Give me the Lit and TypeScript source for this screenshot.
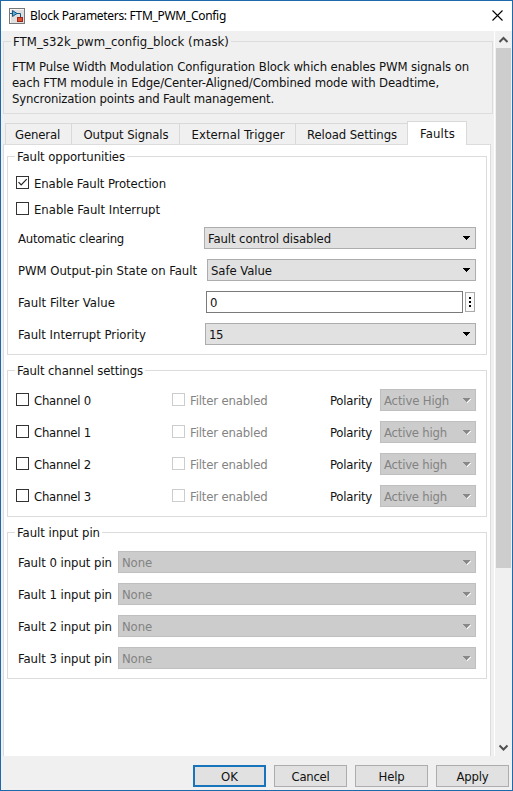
import { LitElement, html, css, svg } from "lit";
import { customElement, property } from "lit/decorators.js";
import { classMap } from "lit/directives/class-map.js";

/** A single line of text, tracked so that it takes up the given width. */
@customElement("fit-text")
class FitText extends LitElement {
  @property() text = "";
  @property({ type: Number }) w = 0;
  static styles = css`
    :host { display: block; height: var(--line, 16px); white-space: pre; flex: none; }
    span { display: inline-block; line-height: var(--lead, 18px); vertical-align: top; }
  `;
  updated() {
    const el = this.renderRoot.querySelector("span") as HTMLElement;
    el.style.letterSpacing = "0px";
    const natural = el.getBoundingClientRect().width;
    el.style.letterSpacing = (this.w - natural) / this.text.length + "px";
  }
  render() { return html`<span>${this.text}</span>`; }
}

@customElement("check-box")
class CheckBox extends LitElement {
  @property() label = "";
  @property({ type: Number }) w = 0;
  @property({ type: Boolean }) checked = false;
  @property({ type: Boolean }) disabled = false;
  static styles = css`
    :host { display: flex; align-items: center; height: 16px; }
    .box { width: 11px; height: 11px; border: 1px solid #333; background: #fff; margin: 0 5px 1px 0; flex: none; }
    .box svg { display: block; }
    .off .box { border-color: #ccc; }
    .row { display: flex; align-items: center; color: #111; }
    .row.off { color: #838383; }
  `;
  render() {
    return html`<div class=${classMap({ row: true, off: this.disabled })}>
      <div class="box">${this.checked
        ? html`<svg width="11" height="11"><path d="M1.5 5.2L4.2 8L9.7 2.2" fill="none" stroke="#222" stroke-width="1.2"/></svg>`
        : ""}</div>
      <fit-text .text=${this.label} .w=${this.w}></fit-text>
    </div>`;
  }
}

@customElement("combo-box")
class ComboBox extends LitElement {
  @property() value = "";
  @property({ type: Number }) w = 0;
  @property({ type: Boolean }) disabled = false;
  static styles = css`
    :host { display: block; }
    .box { box-sizing: border-box; height: 22px; border: 1px solid #adadad; background: #e1e1e1; color: #111;
      display: flex; align-items: center; justify-content: space-between; padding: 0 4px 0 3px; }
    .box.off { background: #ccc; border-color: #bfbfbf; color: #838383; }
    svg { display: block; }
  `;
  render() {
    return html`<div class=${classMap({ box: true, off: this.disabled })}>
      <fit-text .text=${this.value} .w=${this.w}></fit-text>
      <svg width="9" height="6" shape-rendering="crispEdges">
        ${this.disabled ? svg`<path d="M5 5H6V4H7V3H8V2H9V3H8V4H7V5H6V6H5Z" fill="#fff"/>` : ""}
        <path d="M1 1H8V2H7V3H6V4H5V5H4V4H3V3H2V2H1Z" fill=${this.disabled ? "#888" : "#000"}/>
      </svg>
    </div>`;
  }
}

const TABS: [string, number, number][] = [
  ["General", 66, 45], ["Output Signals", 108, 85], ["External Trigger", 116, 93],
  ["Reload Settings", 112, 90], ["Faults", 60, 35],
];
const BUTTONS: [string, number][] = [["OK", 17], ["Cancel", 38], ["Help", 26], ["Apply", 32]];

@customElement("app-root")
class AppRoot extends LitElement {
  static styles = css`
    :host { display: block; }
    * { box-sizing: border-box; }
    .window { width: 513px; height: 791px; border: 1px solid #1c6aab; background: #f0f0f0; color: #111;
      font: 13px/16px "DejaVu Sans Condensed", "DejaVu Sans", sans-serif; font-stretch: condensed;
      display: flex; flex-direction: column; overflow: hidden; }
    .title { height: 30px; flex: none; background: #fff; display: flex; align-items: center; color: #000;
      padding: 0 9px 1px 8px; font: 12px/16px "Noto Sans", sans-serif; --lead: 16px; }
    .title .app { margin-right: 5px; }
    .title .close { margin-left: auto; margin-bottom: 1px; }
    svg { display: block; flex: none; }
    .body { display: flex; height: 725px; flex: none; }
    .view { width: 493px; padding: 3px 0 0 2px; display: flex; flex-direction: column; overflow: hidden; }
    fieldset { border: 1px solid #dcdcdc; margin: 0; padding: 0; min-width: 0; flex: none; }
    legend { height: 15px; line-height: 15px; padding: 0 2px; margin-left: 7px; --line: 15px; --lead: 15px; }
    .mask { width: 490px; height: 80px; }
    .desc { display: flex; flex-direction: column; padding: 9px 0 0 8px; }
    .tabs { display: flex; align-items: flex-end; height: 23px; margin-top: 7px; padding-left: 2px; flex: none; position: relative; z-index: 1; }
    .tab { height: 21px; border: 1px solid #d9d9d9; border-right: 0; border-bottom: 0; display: flex; justify-content: center; align-items: center; padding-left: 1px; }
    .tab:first-child { padding: 0 2px 0 0; }
    .tab.on { height: 24px; background: #fff; border-right: 1px solid #d9d9d9; margin-bottom: -1px; --lead: 16px; }
    .panel { width: 488px; flex: 1; border: 1px solid #dcdcdc; border-bottom: 0; background: #fff; padding: 4px 3px 0 3px;
      display: flex; flex-direction: column; gap: 8px; }
    .opp { height: 206px; }
    .chan, .pins { height: 154px; }
    .checks { padding: 11px 0 0 8px; display: flex; flex-direction: column; gap: 10px; }
    .rows { display: flex; flex-direction: column; gap: 10px; padding-right: 10px; }
    .opp .rows { padding-top: 10px; }
    .chan .rows, .pins .rows { padding-top: 11px; }
    .row { display: flex; align-items: center; height: 22px; padding-left: 10px; }
    .row combo-box { margin-left: auto; }
    .wide1 { width: 272px; } .wide2 { width: 269px; } .wide3 { width: 271px; }
    .pin { width: 358px; } .pol { width: 96px; }
    .field { margin-left: auto; width: 257px; height: 22px; border: 1px solid #7a7a7a; display: flex; align-items: center; padding-left: 3px; }
    .more { width: 10px; height: 20px; border: 1px solid #aaa; background: #fafafa; margin: 0 1px 0 2px; }
    .chan .row { padding-left: 8px; }
    .c1 { width: 156px; } .c2 { width: 158px; }
    .bar { width: 18px; background: #f0f0f0; border-left: 1px solid #fff; display: flex; flex-direction: column; }
    .thumb { background: #cdcdcd; height: 520px; width: 15px; margin-left: 1px; }
    .bar .down { margin-top: auto; }
    .foot { flex: 1; display: flex; justify-content: flex-end; gap: 8px; padding: 9px 3px 0 0; }
    .btn { width: 73px; height: 22px; background: #e1e1e1; border: 1px solid #adadad; display: flex; justify-content: center; align-items: center; }
    .btn.def { border: 2px solid #1874bb; }
  `;

  combo(label: string, lw: number, value: string, vw: number, cls: string, off = false) {
    return html`<div class="row"><fit-text .text=${label} .w=${lw}></fit-text>
      <combo-box class=${cls} .value=${value} .w=${vw} .disabled=${off}></combo-box></div>`;
  }

  render() {
    return html`<div class="window">
      <div class="title">
        <svg class="app" width="16" height="16">
          <rect x=".5" y=".5" width="15" height="15" fill="#dedede" stroke="#777"/>
          <path d="M1 1H15V2H2V15H1Z" fill="#f7f7f7"/>
          <path d="M3.5 2.5V8.5L8 5.5Z" fill="#5ea9dc" stroke="#16557f"/>
          <path d="M8 5.5H11.5V9M1 5.5H3" fill="none" stroke="#16557f"/>
          <rect x="8.5" y="9.5" width="5" height="4" fill="#e0502f" stroke="#9c2618"/>
        </svg>
        <fit-text .text=${"Block Parameters: FTM_PWM_Config"} .w=${196}></fit-text>
        <svg class="close" width="11" height="11"><path d="M.5 .5L10.5 10.5M10.5 .5L.5 10.5" stroke="#000" stroke-width="1.1"/></svg>
      </div>
      <div class="body">
        <div class="view">
          <fieldset class="mask">
            <legend><fit-text .text=${"FTM_s32k_pwm_config_block (mask)"} .w=${216}></fit-text></legend>
            <div class="desc">
              <fit-text .text=${"FTM Pulse Width Modulation Configuration Block which enables PWM signals on"} .w=${457}></fit-text>
              <fit-text .text=${"each FTM module in Edge/Center-Aligned/Combined mode with Deadtime,"} .w=${427}></fit-text>
              <fit-text .text=${"Syncronization points and Fault management."} .w=${262}></fit-text>
            </div>
          </fieldset>
          <div class="tabs">${TABS.map(([t, w, tw], i) => html`<div class=${classMap({ tab: true, on: i === 4 })} style="width:${w}px">
            <fit-text .text=${t} .w=${tw}></fit-text></div>`)}</div>
          <div class="panel">
            <fieldset class="opp">
              <legend><fit-text .text=${"Fault opportunities"} .w=${108}></fit-text></legend>
              <div class="checks">
                <check-box .label=${"Enable Fault Protection"} .w=${132} .checked=${true}></check-box>
                <check-box .label=${"Enable Fault Interrupt"} .w=${126}></check-box>
              </div>
              <div class="rows">
                ${this.combo("Automatic clearing", 106, "Fault control disabled", 123, "wide1")}
                ${this.combo("PWM Output-pin State on Fault", 179, "Safe Value", 61, "wide2")}
                <div class="row"><fit-text .text=${"Fault Filter Value"} .w=${97}></fit-text>
                  <div class="field"><fit-text .text=${"0"} .w=${7}></fit-text></div>
                  <div class="more"><svg width="8" height="18"><path d="M3 4h2v2h-2zM3 8h2v2h-2zM3 12h2v2h-2z" fill="#000"/></svg></div></div>
                ${this.combo("Fault Interrupt Priority", 128, "15", 14, "wide3")}
              </div>
            </fieldset>
            <fieldset class="chan">
              <legend><fit-text .text=${"Fault channel settings"} .w=${126}></fit-text></legend>
              <div class="rows">${[0, 1, 2, 3].map((n) => html`<div class="row">
                <check-box class="c1" .label=${"Channel " + n} .w=${57}></check-box>
                <check-box class="c2" .label=${"Filter enabled"} .w=${77.5} .disabled=${true}></check-box>
                <fit-text .text=${"Polarity"} .w=${42}></fit-text>
                <combo-box class="pol" .value=${n ? "Active high" : "Active High"} .w=${n ? 63 : 65} .disabled=${true}></combo-box>
              </div>`)}</div>
            </fieldset>
            <fieldset class="pins">
              <legend><fit-text .text=${"Fault input pin"} .w=${83}></fit-text></legend>
              <div class="rows">${[0, 1, 2, 3].map((n) => this.combo(`Fault ${n} input pin`, 94, "None", 30, "pin", true))}</div>
            </fieldset>
          </div>
        </div>
        <div class="bar">
          <svg width="16" height="17"><path d="M4.5 11L8.5 7L12.5 11" fill="none" stroke="#505050" stroke-width="2"/></svg>
          <div class="thumb"></div>
          <svg class="down" width="16" height="17"><path d="M4.5 6.5L8.5 10.5L12.5 6.5" fill="none" stroke="#505050" stroke-width="2"/></svg>
        </div>
      </div>
      <div class="foot">${BUTTONS.map(([t, w], i) => html`<div class=${classMap({ btn: true, def: i === 0 })}>
        <fit-text .text=${t} .w=${w}></fit-text></div>`)}</div>
    </div>`;
  }
}
